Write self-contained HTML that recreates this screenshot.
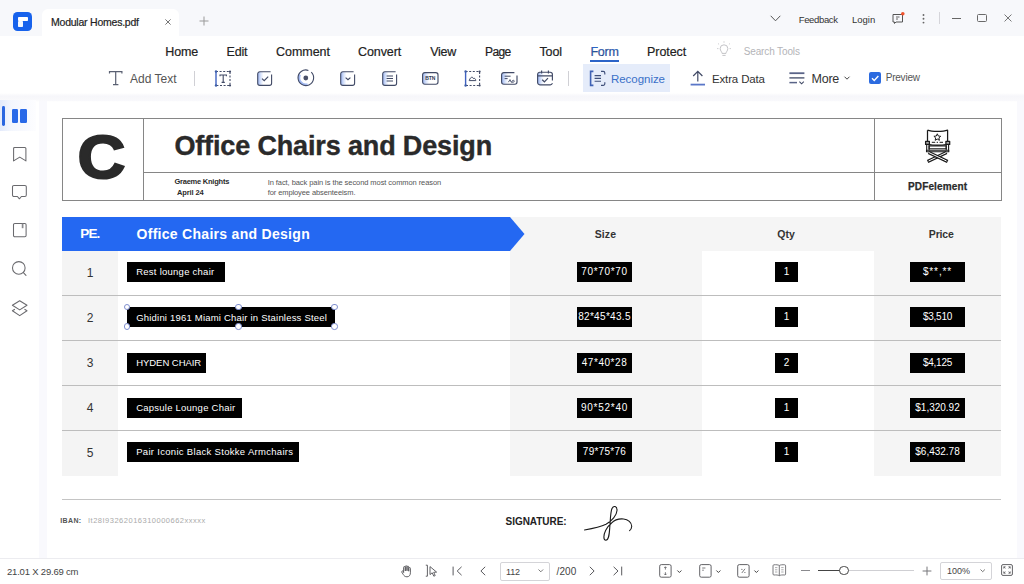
<!DOCTYPE html>
<html><head><meta charset="utf-8"><title>Modular Homes.pdf</title>
<style>
*{box-sizing:border-box;margin:0;padding:0}
html,body{width:1024px;height:584px;overflow:hidden;background:#fff;font-family:"Liberation Sans",sans-serif;color:#222}
.a{position:absolute}
.t{position:absolute;white-space:nowrap;line-height:1}
#titlebar{left:0;top:0;width:1024px;height:36px;background:#f7f8fb}
#tab{left:42px;top:8.5px;width:137px;height:27.5px;background:#fff;border-radius:6px 6px 0 0}
#ribbon{left:0;top:36px;width:1024px;height:58px;background:#fff}
#shade{left:0;top:93px;width:1024px;height:9px;background:linear-gradient(180deg,#fff 0,#f6f6fa 35%,#f8f8fb 70%,rgba(255,255,255,0) 100%)}
#work{left:39px;top:94px;width:985px;height:464px;background:#f9f9fd}
#page{left:47px;top:101px;width:970px;height:457px;background:#fff}
#side{left:0;top:94px;width:39px;height:464px;background:#fff}
#status{left:0;top:558px;width:1024px;height:26px;background:#fff;border-top:1px solid #ececf0}
.menu{top:46px;font-size:12.5px;color:#222;-webkit-text-stroke:.2px #222}
.tb{top:73.7px;font-size:11.5px;color:#333}
svg{position:absolute;overflow:visible}
.bb{position:absolute;background:#000;color:#fff;font-size:9.5px;line-height:19.5px;height:19.5px;white-space:nowrap;text-align:center}
.bn{font-size:10px}
.num{position:absolute;width:56px;left:62px;text-align:center;font-size:12px;color:#333;line-height:1}
.hl{position:absolute;left:62px;width:939px;height:1px;background:#bdbdbd}
</style></head><body>
<div class="a" id="titlebar"></div>
<div class="a" id="tab"></div>
<div class="a" id="ribbon"></div>
<div class="a" id="work"></div>
<div class="a" id="page"></div>
<div class="a" id="side"></div>
<div class="a" id="shade"></div>
<div class="a" id="status"></div>


<!-- SIDEBAR -->
<div class="a" style="left:0;top:100px;width:36px;height:31px;background:linear-gradient(90deg,#e3eafb 0,#f3f6fd 30%,#fdfdff 100%)"></div>
<div class="a" style="left:2px;top:106px;width:2.8px;height:19.5px;background:#2a66e0;border-radius:1.4px"></div>
<div class="a" style="left:11.6px;top:109px;width:6.6px;height:13.8px;background:#2a6ae8;border-radius:1.2px"></div>
<div class="a" style="left:19.9px;top:109px;width:6.8px;height:13.8px;background:#2a6ae8;border-radius:1.2px"></div>
<svg style="left:12px;top:146px" width="16" height="17" viewBox="0 0 16 17" fill="none" stroke="#6a6a6e" stroke-width="1.05" stroke-linejoin="round"><path d="M1.6 2.4A1 1 0 0 1 2.6 1.4H12.9A1 1 0 0 1 13.9 2.4V14.9L7.75 11.1 1.6 14.9Z"/></svg>
<svg style="left:11px;top:184px" width="17" height="17" viewBox="0 0 17 17" fill="none" stroke="#6a6a6e" stroke-width="1.05" stroke-linejoin="round"><path d="M2.9 1.5H13.9A1.4 1.4 0 0 1 15.3 2.9V11.1A1.4 1.4 0 0 1 13.9 12.500H10.400L8.400 14.800 6.400 12.500H2.900A1.400 1.400 0 0 1 1.500 11.100V2.900A1.400 1.400 0 0 1 2.900 1.500Z"/></svg>
<svg style="left:12px;top:222px" width="16" height="16" viewBox="0 0 16 16" fill="none" stroke="#6a6a6e" stroke-width="1.05"><rect x="1.5" y="1.4" width="12.6" height="13.400" rx="1.300"/><path d="M10.600 1.600V6.200" stroke-width="1.700" stroke="#8a8a8e"/></svg>
<svg style="left:11px;top:260px" width="17" height="17" viewBox="0 0 17 17" fill="none" stroke="#6a6a6e" stroke-width="1.050" stroke-linecap="round"><circle cx="7.800" cy="7.900" r="6.300"/><path d="M12.400 12.600 15 15.400"/></svg>
<svg style="left:11px;top:299px" width="18" height="19" viewBox="0 0 18 19" fill="none" stroke="#6a6a6e" stroke-width="1.050" stroke-linejoin="round"><path d="M8.700 1.700 16 6.300 8.700 10.900 1.400 6.300Z"/><path d="M3.900 10.200 1.400 11.800 8.700 16.600 16 11.800 13.500 10.200"/></svg>

<!-- TITLE BAR -->
<div class="a" style="left:13px;top:12px;width:19px;height:19px;background:#1762ec;border-radius:4.5px"></div>
<div class="a" style="left:17.5px;top:16.5px;width:10px;height:4.300px;background:#fff;border-radius:.8px"></div>
<div class="a" style="left:17.5px;top:21.400px;width:5.400px;height:5.400px;background:#f4f8ff;border-radius:.8px"></div>
<div class="t" id="tabtxt" style="letter-spacing:-0.227px;-webkit-text-stroke:.2px #222;left:51px;top:17.1px;font-size:10.5px;color:#222">Modular Homes.pdf</div>
<svg style="left:165px;top:18.6px" width="6" height="6" viewBox="0 0 6 6"><path d="M.4.4 5.600 5.600M5.600.4.4 5.600" stroke="#666" stroke-width=".9" fill="none"/></svg>
<svg style="left:199px;top:16px" width="10" height="10" viewBox="0 0 10 10"><path d="M5 .5V9.5M.5 5H9.5" stroke="#999" stroke-width="1" fill="none"/></svg>
<svg style="left:770px;top:15px" width="11" height="7" viewBox="0 0 11 7"><path d="M.7.8 5.5 5.8 10.3.8" stroke="#555" stroke-width="1" fill="none"/></svg>
<div class="t" id="fb" style="letter-spacing:-0.348px;left:798.7px;top:14.5px;font-size:9.5px;color:#333">Feedback</div>
<div class="t" id="lg" style="letter-spacing:-0.012px;left:852px;top:14.5px;font-size:9.5px;color:#333">Login</div>
<svg style="left:892px;top:12px" width="14" height="13" viewBox="0 0 14 13"><path d="M1 2.5h9.5v7.5H4l-1.5 1.5V10H1z" stroke="#555" stroke-width="1" fill="none"/><path d="M4 5h3.5M4 7h2" stroke="#555" stroke-width=".9"/><circle cx="10.8" cy="1.8" r="1.8" fill="#f0522c"/></svg>
<svg style="left:922.200px;top:13.500px" width="3" height="10" viewBox="0 0 3 10"><circle cx="1.500" cy="1" r=".950" fill="#666"/><circle cx="1.500" cy="4.800" r=".950" fill="#666"/><circle cx="1.500" cy="8.600" r=".950" fill="#666"/></svg>
<div class="a" style="left:939px;top:12px;width:1px;height:12px;background:#d5d5da"></div>
<div class="a" style="left:951.500px;top:18px;width:9px;height:1px;background:#666"></div>
<div class="a" style="left:977px;top:14px;width:10px;height:8px;border:1px solid #6a6a6a;border-radius:1.500px"></div>
<svg style="left:1003.500px;top:14.200px" width="8" height="8" viewBox="0 0 9 9"><path d="M.6.6 8.4 8.4M8.4.6.6 8.4" stroke="#666" stroke-width="1" fill="none"/></svg>

<!-- MENU -->
<div class="t menu" id="m1" style="letter-spacing:-0.115px;left:165.3px">Home</div>
<div class="t menu" id="m2" style="letter-spacing:-0.182px;left:226.5px">Edit</div>
<div class="t menu" id="m3" style="letter-spacing:-0.031px;left:276px">Comment</div>
<div class="t menu" id="m4" style="letter-spacing:-0.08px;left:358px">Convert</div>
<div class="t menu" id="m5" style="letter-spacing:-0.292px;left:430.3px">View</div>
<div class="t menu" id="m6" style="letter-spacing:-0.577px;left:485px;font-size:12px">Page</div>
<div class="t menu" id="m7" style="letter-spacing:-0.146px;left:539.5px">Tool</div>
<div class="t menu" id="m8" style="letter-spacing:-0.291px;left:590.5px;color:#2c64c8">Form</div>
<div class="a" style="left:590px;top:60px;width:29px;height:1.5px;background:#2c64c8"></div>
<div class="t menu" id="m9" style="letter-spacing:-0.052px;left:647px">Protect</div>
<div class="t" id="st" style="letter-spacing:-0.122px;left:743.7px;top:46.8px;font-size:10px;color:#b4b4b8">Search Tools</div>

<!-- TOOLBAR -->
<div class="a" style="left:583px;top:64px;width:87px;height:28px;background:#e5ecfa"></div>
<div class="t tb" id="t1" style="top:73.2px;letter-spacing:0.031px;font-size:12px;left:130px;color:#555">Add Text</div>
<div class="a" style="left:194px;top:71px;width:1px;height:15px;background:#d0d0d5"></div>
<div class="a" style="left:568px;top:71px;width:1px;height:15px;background:#d0d0d5"></div>
<div class="t tb" id="t2" style="letter-spacing:-0.043px;left:611px;color:#3a70c8">Recognize</div>
<div class="t tb" id="t3" style="letter-spacing:-0.148px;left:712px">Extra Data</div>
<div class="t tb" id="t4" style="top:72.8px;letter-spacing:-0.228px;font-size:12.5px;left:811.5px">More</div>
<div class="a" style="left:868.700px;top:72px;width:12.200px;height:12.200px;background:#2c6be0;border-radius:2px"></div>
<svg style="left:868.700px;top:72px" width="12.200" height="12.200" viewBox="0 0 13 13"><path d="M3.2 6.6 5.6 9 10 4.2" stroke="#fff" stroke-width="1.5" fill="none"/></svg>
<div class="t" id="t5" style="letter-spacing:-0.213px;left:885.7px;top:73.4px;font-size:10px;color:#555">Preview</div>


<!-- TOOLBAR ICONS -->
<svg width="0" height="0" style="left:0;top:0"><defs><linearGradient id="lg1" x1="0" y1="0" x2="1" y2="0"><stop offset="0" stop-color="#9fb8f2"/><stop offset=".25" stop-color="#dfe8fb"/><stop offset=".42" stop-color="#ffffff"/></linearGradient></defs></svg>

<svg style="left:108px;top:70px" width="16" height="16" viewBox="0 0 16 16" fill="none" stroke="#5a6072" stroke-width="1.2"><path d="M1.5 3.6V1.6H13.9V3.6M7.7 1.6V14.6M5 14.6H10.4"/></svg>
<svg style="left:214px;top:70px" width="18" height="17" viewBox="0 0 18 17" fill="none"><path d="M2 1.5H16V15.5H2" stroke="#414a66" stroke-width="1.1" stroke-dasharray="2 1.6"/><path d="M2 1.5V15.5" stroke="#3f62c0" stroke-width="1.4"/><circle cx="2" cy="1.5" r="1.2" fill="#3f5fa8"/><circle cx="2" cy="15.5" r="1.2" fill="#3f5fa8"/><circle cx="16" cy="1.5" r="1.1" fill="#414a66"/><circle cx="16" cy="15.5" r="1.1" fill="#414a66"/><path d="M6 6.2V5H12.4V6.2M9.2 5V12.4M7.6 12.4H10.8" stroke="#414a66" stroke-width="1.1"/></svg>
<svg style="left:257px;top:71px" width="16" height="15" viewBox="0 0 16 15" fill="none"><rect x=".8" y=".8" width="13.6" height="13.6" rx="2" fill="url(#lg1)"/><path d="M13.6.7H2.9A2.2 2.2 0 0 0 .7 2.9V12.2A2.2 2.2 0 0 0 2.9 14.4H12.4A2.2 2.2 0 0 0 14.6 12.2V3.6" stroke="#414a66" stroke-width="1.1"/><path d="M5 7.6 7.2 9.6 11.2 5.6" stroke="#414a66" stroke-width="1.2"/></svg>
<svg style="left:297px;top:69px" width="18" height="18" viewBox="0 0 18 18" fill="none"><path d="M2.9 5.6A6.9 6.9 0 0 0 10.6 15.5" stroke="#a4bbf3" stroke-width="2.4"/><path d="M14.3 3.2A7.8 7.8 0 1 1 11.4 1.4" stroke="#414a66" stroke-width="1.1"/><circle cx="8.8" cy="9" r="2.4" fill="#4a5068"/></svg>
<svg style="left:340px;top:71px" width="16" height="15" viewBox="0 0 16 15" fill="none"><rect x=".8" y=".8" width="13.6" height="13.6" rx="2" fill="url(#lg1)"/><path d="M13.6.7H2.9A2.2 2.2 0 0 0 .7 2.9V12.2A2.2 2.2 0 0 0 2.9 14.4H12.4A2.2 2.2 0 0 0 14.6 12.2V3.6" stroke="#414a66" stroke-width="1.1"/><path d="M5.6 6.6 8 8.8 10.4 6.6" stroke="#414a66" stroke-width="1.2"/></svg>
<svg style="left:382px;top:71px" width="16" height="15" viewBox="0 0 16 15" fill="none"><rect x=".8" y=".8" width="13.6" height="13.6" rx="2" fill="url(#lg1)"/><path d="M13.6.7H2.9A2.2 2.2 0 0 0 .7 2.9V12.2A2.2 2.2 0 0 0 2.9 14.4H12.4A2.2 2.2 0 0 0 14.6 12.2V3.6" stroke="#414a66" stroke-width="1.1"/><path d="M4.6 5H11M4.6 7.5H11M4.6 10H11" stroke="#414a66" stroke-width="1.1"/></svg>
<svg style="left:422px;top:72px" width="17" height="13" viewBox="0 0 17 13" fill="none"><rect x=".8" y=".8" width="15" height="11.2" rx="2" fill="url(#lg1)"/><rect x=".6" y=".6" width="15.4" height="11.6" rx="2.2" stroke="#414a66" stroke-width="1.15"/><text x="8.3" y="8.2" font-family="Liberation Sans,sans-serif" font-size="5" font-weight="bold" fill="#30384e" text-anchor="middle" stroke="none">BTN</text></svg>
<svg style="left:464px;top:70px" width="18" height="17" viewBox="0 0 18 17" fill="none"><path d="M1.6 1.5H15.6V15.5H1.6" stroke="#414a66" stroke-width="1.1" stroke-dasharray="2 1.6"/><path d="M1.6 1.5V15.5" stroke="#3f62c0" stroke-width="1.4"/><circle cx="1.6" cy="1.5" r="1.2" fill="#3f5fa8"/><circle cx="1.6" cy="15.5" r="1.2" fill="#3f5fa8"/><circle cx="15.6" cy="1.5" r="1.1" fill="#414a66"/><circle cx="15.6" cy="15.5" r="1.1" fill="#414a66"/><path d="M5.2 10.6H11.8C11.6 8.6 10.4 7.8 9.4 8.6C8.8 6.6 6.6 6.4 5.2 10.6Z" stroke="#414a66" stroke-width="1"/></svg>
<svg style="left:501px;top:72px" width="17" height="13" viewBox="0 0 17 13" fill="none"><rect x=".8" y=".8" width="15" height="11.2" rx="2" fill="url(#lg1)"/><path d="M13.4.6H2.8A2.2 2.2 0 0 0 .6 2.8V10A2.2 2.2 0 0 0 2.8 12.2H13.8A2.2 2.2 0 0 0 16 10V3.4" stroke="#414a66" stroke-width="1.15"/><path d="M3.6 4.2H9.6M3.6 6.6H6.6" stroke="#414a66" stroke-width="1"/><path d="M7.4 10.2 9 7.6 10.2 10.2H11C10.6 8 13.4 7.6 13.2 9.4C13.1 10.4 11.4 10.4 11 10.2" stroke="#414a66" stroke-width=".9"/></svg>
<svg style="left:537px;top:70px" width="17" height="16" viewBox="0 0 17 16" fill="none"><rect x=".8" y="2.400" width="14.400" height="12.200" rx="2" fill="url(#lg1)"/><path d="M15.4 10.6V4.4A2.2 2.2 0 0 0 13.2 2.2H2.8A2.2 2.2 0 0 0 .6 4.4V12.6A2.2 2.2 0 0 0 2.8 14.8H13.2A2.2 2.2 0 0 0 15.4 13.2M.8 5.8H15.2M4.6.4V3.4M11.4.4V3.4" stroke="#414a66" stroke-width="1.15"/><path d="M5.2 9.8 7.4 11.8 11 8.2" stroke="#414a66" stroke-width="1.2"/></svg>
<svg style="left:589px;top:70px" width="17" height="17" viewBox="0 0 17 17" fill="none"><path d="M4.4 1.4H1.6V15.4H4.4" stroke="#3f62b4" stroke-width="1.6"/><path d="M12 1.4H14.2A1.6 1.6 0 0 1 15.8 3V4.6M15.8 12.2V13.8A1.6 1.6 0 0 1 14.2 15.4H12" stroke="#3f4f7a" stroke-width="1.15"/><path d="M5.6 5.6H12M5.6 8.4H12M5.6 11.2H12" stroke="#3f4f7a" stroke-width="1.1"/></svg>
<svg style="left:690px;top:70px" width="16" height="16" viewBox="0 0 16 16" fill="none"><path d="M.6 14.6H15" stroke="#5a77c8" stroke-width="1.8"/><path d="M7.8 11.4V1.4M3.2 6 7.8 1.3 12.4 6" stroke="#414a66" stroke-width="1.2"/></svg>
<svg style="left:789px;top:72px" width="16" height="13" viewBox="0 0 16 13" fill="none"><path d="M.4 1.2H15.4" stroke="#5a6488" stroke-width="1.8"/><path d="M.4 5.9H15.4" stroke="#414a66" stroke-width="1.3"/><path d="M.4 10.6H8" stroke="#5a6488" stroke-width="1.5"/><path d="M10.4 9.6 12.6 11.8 14.8 9.6" stroke="#414a66" stroke-width="1.1"/></svg>
<svg style="left:844px;top:76px" width="6" height="4" viewBox="0 0 6 4" fill="none"><path d="M.5.7 3 3.2 5.5.7" stroke="#444" stroke-width="1"/></svg>
<svg style="left:717px;top:41px" width="14" height="17" viewBox="0 0 14 17" fill="none" stroke="#c4c4c8" stroke-width="1"><path d="M5 12.4H9M5.4 14.4H8.6M5 12.4C5 10.6 3.2 10 3.2 7.6A3.8 3.8 0 0 1 10.8 7.6C10.8 10 9 10.6 9 12.4"/><path d="M7 .4V2M1.2 2.6 2.4 3.8M12.8 2.6 11.6 3.8M.2 7.6H1.4M12.6 7.6H13.8" stroke-dasharray="1.2 .6"/></svg>

<!-- DOC -->
<div class="a" style="left:62px;top:118px;width:940px;height:83px;border:1px solid #868686"></div>
<div class="a" style="left:143px;top:118px;width:1px;height:83px;background:#868686"></div>
<div class="a" style="left:874px;top:118px;width:1px;height:83px;background:#868686"></div>
<div class="a" style="left:143px;top:172px;width:858px;height:1px;background:#868686"></div>
<div class="t" id="bigc" style="-webkit-text-stroke:2px #2a2a2a;transform:scaleX(1.07);transform-origin:50% 50%;left:79px;top:126.2px;font-size:62px;font-weight:bold;color:#2a2a2a">C</div>
<div class="t" id="h1" style="letter-spacing:-0.143px;-webkit-text-stroke:.4px #2a2a2a;left:174.4px;top:132.6px;font-size:27px;font-weight:bold;color:#2a2a2a">Office Chairs and Design</div>
<div class="t" id="gk" style="letter-spacing:-0.226px;left:174.4px;top:178px;font-size:7.5px;font-weight:bold;color:#2a2a2a">Graeme Knights</div>
<div class="t" id="ap" style="letter-spacing:-0.117px;left:177px;top:188.8px;font-size:7.5px;font-weight:bold;color:#2a2a2a">April 24</div>
<div class="t" id="p1" style="letter-spacing:-0.072px;left:267.7px;top:179.2px;font-size:7.5px;color:#555">In fact, back pain is the second most common reason</div>
<div class="t" id="p2" style="letter-spacing:-0.094px;left:267.7px;top:188.8px;font-size:7.5px;color:#555">for employee absenteeism.</div>
<div class="t" id="pdfe" style="-webkit-text-stroke:.25px #2a2a2a;letter-spacing:0.134px;left:908px;top:181.7px;font-size:10px;font-weight:bold;color:#2a2a2a">PDFelement</div>

<svg style="left:917px;top:124px" width="40" height="44" viewBox="0 0 40 44" fill="none" stroke="#1a1a1a" stroke-width="1.25" stroke-linejoin="round"><path d="M10.5 6.2C15 7.9 26 7.9 30.6 6.2V17.4M10.5 6.2V17.4M12.4 20.5C16 21.4 25 21.4 28.8 20.5"/><path d="M20.3 9.8 21.3 12 23.7 12.3 21.9 13.9 22.4 16.3 20.3 15.1 18.2 16.3 18.7 13.9 16.9 12.3 19.3 12Z" stroke-width="1"/><path d="M14.8 18.3H18.2M19.7 18.3H21M22.6 18.3H26" stroke-width="1"/><rect x="8.6" y="17.4" width="3.8" height="3" fill="#aaa"/><rect x="28.9" y="17.4" width="3.8" height="3" fill="#aaa"/><path d="M9.7 20.4V26.2M12.1 20.4V26.2M29.2 20.4V26.2M31.6 20.4V26.2" stroke-width="1.1"/><rect x="12.1" y="21.9" width="17.1" height="2.9" stroke-width="1.1"/><rect x="9.5" y="26.2" width="22.3" height="1.5" stroke-width="1.1"/><path d="M29.6 28.4 10.6 37.4" stroke-width="3.3" stroke-linecap="butt"/><path d="M29.4 28.5 11.6 37" stroke="#fff" stroke-width="1"/><path d="M11.6 28.4 30.6 37.4" stroke-width="3.3"/><path d="M11.8 28.5 29.6 37" stroke="#fff" stroke-width="1"/></svg>
<svg style="left:580px;top:502px" width="60" height="42" viewBox="580 502 60 42" fill="none" stroke="#1a1a1a" stroke-width="1.1" stroke-linecap="round"><path d="M584.5 530C592 528.600 600 527 606 524.200C612 521 616.800 515 617 510.500C617.200 506 613.600 505.200 612 508.500C610.400 512 610.400 520 609.800 527C609.400 533 609 540.200 605.800 540.200C603.200 540.200 603.400 535 605.600 530.500C607 527.500 609 525 611.400 523.200C614 520.500 619 518.600 623.500 519C628 519.400 631.800 522.500 631.700 526.500C631.600 528.500 630.600 529.800 629.600 530.600"/></svg>
<!-- table -->
<div class="a" style="left:510px;top:217px;width:491px;height:34px;background:#f5f5f5"></div>
<div class="a" style="left:62px;top:250px;width:56px;height:226px;background:#f4f4f4"></div>
<div class="a" style="left:510px;top:250px;width:192px;height:226px;background:#f5f5f5"></div>
<div class="a" style="left:874px;top:250px;width:127px;height:226px;background:#f5f5f5"></div>
<div class="a" style="left:62px;top:217px;width:448px;height:34px;background:#2468f2"></div>
<svg style="left:509px;top:217px" width="16" height="34" viewBox="0 0 16 34"><path d="M0 0H1L15.5 17 1 34H0z" fill="#2468f2"/></svg>
<div class="t" id="pe" style="letter-spacing:-0.883px;left:80.3px;top:226.5px;font-size:13.5px;font-weight:bold;color:#fff">PE.</div>
<div class="t" id="h2" style="letter-spacing:0.292px;left:136.5px;top:226.5px;font-size:14px;font-weight:bold;color:#fff">Office Chairs and Design</div>
<div class="t" id="c1" style="letter-spacing:0.061px;left:594.8px;top:229.1px;font-size:10.5px;font-weight:bold;color:#333">Size</div>
<div class="t" id="c2" style="letter-spacing:-0.008px;left:777.3px;top:229.1px;font-size:10.5px;font-weight:bold;color:#333">Qty</div>
<div class="t" id="c3" style="letter-spacing:-0.172px;left:928.8px;top:229.1px;font-size:10.5px;font-weight:bold;color:#333">Price</div>
<div class="hl" style="top:295px"></div>
<div class="hl" style="top:340px"></div>
<div class="hl" style="top:385px"></div>
<div class="hl" style="top:430px"></div>

<div class="num" style="top:266.7px">1</div>
<div class="num" style="top:311.9px">2</div>
<div class="num" style="top:357.1px">3</div>
<div class="num" style="top:402px">4</div>
<div class="num" style="top:447.3px">5</div>

<div class="bb" style="text-align:left;padding-left:9.200px;left:127px;top:262px;width:98px"><span id="b1" style="letter-spacing:0.254px;">Rest lounge chair</span></div>
<div class="bb" style="text-align:left;padding-left:9.200px;left:127px;top:307px;width:207.500px;border-radius:2px;line-height:21px"><span id="b2" style="letter-spacing:0.203px;">Ghidini 1961 Miami Chair in Stainless Steel</span></div>
<div class="a" style="left:123.8px;top:303.8px;width:6.400px;height:6.400px;border:1px solid #7f8fd0;border-radius:50%;background:#fff"></div>
<div class="a" style="left:235.3px;top:303.8px;width:6.400px;height:6.400px;border:1px solid #7f8fd0;border-radius:50%;background:#fff"></div>
<div class="a" style="left:331.3px;top:303.8px;width:6.400px;height:6.400px;border:1px solid #7f8fd0;border-radius:50%;background:#fff"></div>
<div class="a" style="left:123.8px;top:323.3px;width:6.400px;height:6.400px;border:1px solid #7f8fd0;border-radius:50%;background:#fff"></div>
<div class="a" style="left:235.3px;top:323.3px;width:6.400px;height:6.400px;border:1px solid #7f8fd0;border-radius:50%;background:#fff"></div>
<div class="a" style="left:331.3px;top:323.3px;width:6.400px;height:6.400px;border:1px solid #7f8fd0;border-radius:50%;background:#fff"></div>
<div class="bb" style="text-align:left;padding-left:9.200px;left:127px;top:353px;width:79px"><span id="b3" style="letter-spacing:-0.045px;">HYDEN CHAIR</span></div>
<div class="bb" style="text-align:left;padding-left:9.200px;left:127px;top:398px;width:115px"><span id="b4" style="letter-spacing:0.234px;">Capsule Lounge Chair</span></div>
<div class="bb" style="text-align:left;padding-left:9.200px;left:127px;top:442px;width:172px"><span id="b5" style="letter-spacing:0.307px;">Pair Iconic Black Stokke Armchairs</span></div>

<div class="bb bn" style="left:577px;top:262px;width:55px"><span id="b6" style="letter-spacing:0.663px;">70*70*70</span></div>
<div class="bb bn" style="left:577px;top:307px;width:55px"><span id="b7" style="letter-spacing:0.322px;">82*45*43.5</span></div>
<div class="bb bn" style="left:577px;top:353px;width:55px"><span id="b8" style="letter-spacing:0.549px;">47*40*28</span></div>
<div class="bb bn" style="left:577px;top:398px;width:55px"><span id="b9" style="letter-spacing:0.749px;">90*52*40</span></div>
<div class="bb bn" style="left:577px;top:442px;width:55px"><span id="b10" style="letter-spacing:0.278px;">79*75*76</span></div>

<div class="bb bn" style="left:775px;top:262px;width:23px"><span id="b11">1</span></div>
<div class="bb bn" style="left:775px;top:307px;width:23px"><span id="b12">1</span></div>
<div class="bb bn" style="left:775px;top:353px;width:23px"><span id="b13">2</span></div>
<div class="bb bn" style="left:775px;top:398px;width:23px"><span id="b14">1</span></div>
<div class="bb bn" style="left:775px;top:442px;width:23px"><span id="b15">1</span></div>

<div class="bb bn" style="left:910px;top:262px;width:55px"><span id="b16" style="letter-spacing:0.879px;">$**,**</span></div>
<div class="bb bn" style="left:910px;top:307px;width:55px"><span id="b17" style="letter-spacing:-0.259px;">$3,510</span></div>
<div class="bb bn" style="left:910px;top:353px;width:55px"><span id="b18" style="letter-spacing:-0.239px;">$4,125</span></div>
<div class="bb bn" style="left:910px;top:398px;width:55px"><span id="b19" style="letter-spacing:-0.012px;">$1,320.92</span></div>
<div class="bb bn" style="left:910px;top:442px;width:55px"><span id="b20" style="letter-spacing:-0.012px;">$6,432.78</span></div>

<div class="a" style="left:62px;top:499px;width:939px;height:1px;background:#c4c4c4"></div>
<div class="t" id="iban" style="letter-spacing:0.387px;left:60.2px;top:516.9px;font-size:7px;font-weight:bold;color:#555">IBAN:</div>
<div class="t" id="ibn" style="letter-spacing:0.501px;left:88px;top:516.5px;font-size:7.5px;color:#aaa">It28I93262016310000662xxxxx</div>
<div class="t" id="sig" style="letter-spacing:-0.054px;left:505.6px;top:517.2px;font-size:10px;font-weight:bold;color:#222">SIGNATURE:</div>

<!-- STATUS -->
<div class="t" id="dim" style="letter-spacing:-0.198px;left:7px;top:567.1px;font-size:9.5px;color:#444">21.01 X 29.69 cm</div>
<div class="a" style="left:500px;top:562px;width:50px;height:19px;border:1px solid #d4d4d8;border-radius:2px;background:#fff"></div>
<div class="t" id="pg" style="letter-spacing:-0.18px;left:506px;top:567.9px;font-size:9px;color:#444">112</div>
<div class="t" id="tot" style="letter-spacing:0.077px;left:556.6px;top:567px;font-size:10px;color:#444">/200</div>
<div class="a" style="left:940px;top:562px;width:52px;height:18px;border:1px solid #d4d4d8;border-radius:2px;background:#fff"></div>
<div class="t" id="zm" style="letter-spacing:-0.01px;left:947px;top:567.3px;font-size:9px;color:#444">100%</div>

<!-- STATUS ICONS -->
<svg style="left:400px;top:564px" width="13" height="14" viewBox="0 0 13 14" fill="none" stroke="#5a5a5e" stroke-width=".95" stroke-linejoin="round" stroke-linecap="round"><path d="M3.600 8.200V3.400A.850.850 0 0 1 5.300 3.400V6.600M5.300 6.600V2.600A.850.850 0 0 1 7 2.600V6.400M7 6.400V3A.850.850 0 0 1 8.700 3V6.800M8.700 6.800V4.400A.850.850 0 0 1 10.400 4.400V8.800C10.400 11.400 9 12.800 7 12.800C5 12.800 4.200 12 3.200 10.400L1.700 8A.900.900 0 0 1 3.200 7.200L3.600 8.200"/></svg>
<svg style="left:425px;top:564px" width="14" height="14" viewBox="0 0 14 14" fill="none" stroke="#5a5a5e" stroke-width=".950" stroke-linejoin="round"><path d="M.800 1.200H2.400V12.200H.800"/><path d="M5 2.600V10.600L7.200 8.800 8.800 12.200 10.200 11.600 8.700 8.300 11.600 8.100Z"/></svg>
<svg style="left:452px;top:566px" width="11" height="10" viewBox="0 0 11 10" fill="none" stroke="#5a5a5e" stroke-width="1"><path d="M1.100.600V9.400M9.600.800 5.200 5 9.600 9.200"/></svg>
<svg style="left:480px;top:566px" width="6" height="10" viewBox="0 0 6 10" fill="none" stroke="#5a5a5e" stroke-width="1"><path d="M5.200.800.900 5 5.200 9.200"/></svg>
<svg style="left:538px;top:569px" width="6" height="4" viewBox="0 0 6 4" fill="none" stroke="#666" stroke-width=".9"><path d="M.500.500 2.800 2.800 5.100.500"/></svg>
<svg style="left:589px;top:566px" width="6" height="10" viewBox="0 0 6 10" fill="none" stroke="#5a5a5e" stroke-width="1"><path d="M.800.800 5.100 5 .800 9.200"/></svg>
<svg style="left:613px;top:566px" width="10" height="10" viewBox="0 0 10 10" fill="none" stroke="#5a5a5e" stroke-width="1"><path d="M8.700.600V9.400M.600.800 5 5 .600 9.200"/></svg>
<svg style="left:659px;top:564px" width="13" height="14" viewBox="0 0 13 14" fill="none" stroke="#5a5a5e" stroke-width=".950"><rect x=".700" y=".600" width="11.400" height="12.600" rx="1.600"/><path d="M6.400 2.800V5.600M5.200 4 6.400 2.800 7.600 4M6.400 8.200V11M5.200 9.800 6.400 11 7.600 9.800" stroke-width=".800"/></svg>
<svg style="left:677px;top:569.500px" width="5" height="4" viewBox="0 0 5 4" fill="none" stroke="#444" stroke-width="1"><path d="M.400.500 2.400 2.500 4.400.500"/></svg>
<svg style="left:699px;top:564px" width="13" height="14" viewBox="0 0 13 14" fill="none" stroke="#5a5a5e" stroke-width=".950"><rect x=".700" y=".600" width="11.400" height="12.600" rx="1.600"/><path d="M3.200 4H6.400M3.200 6.200H4.800" stroke-width=".800"/></svg>
<svg style="left:715.500px;top:569.500px" width="5" height="4" viewBox="0 0 5 4" fill="none" stroke="#444" stroke-width="1"><path d="M.400.500 2.400 2.500 4.400.500"/></svg>
<svg style="left:737px;top:564px" width="13" height="14" viewBox="0 0 13 14" fill="none" stroke="#5a5a5e" stroke-width=".950"><rect x=".700" y=".600" width="11.400" height="12.600" rx="1.600"/><path d="M8 4.800 4.800 9" stroke-width=".800"/><circle cx="4.900" cy="5.300" r=".600" fill="#5a5a5e" stroke="none"/><circle cx="7.900" cy="8.500" r=".600" fill="#5a5a5e" stroke="none"/></svg>
<svg style="left:753.500px;top:569.500px" width="5" height="4" viewBox="0 0 5 4" fill="none" stroke="#444" stroke-width="1"><path d="M.400.500 2.400 2.500 4.400.500"/></svg>
<svg style="left:772px;top:564px" width="15" height="13" viewBox="0 0 15 13" fill="none" stroke="#6a6a6e" stroke-width=".900"><path d="M7.300 1.500C6.400.800 4 .600 1.900.800A1 1 0 0 0 1 1.800V10A1 1 0 0 0 2 11C4 10.800 6.400 11 7.300 11.700C8.200 11 10.600 10.800 12.600 11A1 1 0 0 0 13.600 10V1.800A1 1 0 0 0 12.700.800C10.600.600 8.200.800 7.300 1.500ZM7.300 1.500V11.700"/><path d="M3 3.600H5.400M3 5.800H5.400M3 8H5.400M9.200 3.600H11.600M9.200 5.800H11.600M9.200 8H11.600" stroke-width=".700" stroke="#8a8a8e"/></svg>
<div class="a" style="left:801px;top:569.500px;width:8.500px;height:1px;background:#8a8a8e"></div>
<div class="a" style="left:818px;top:569.500px;width:22px;height:1.500px;background:#444"></div>
<div class="a" style="left:848px;top:570px;width:66px;height:1px;background:#cfcfd3"></div>
<div class="a" style="left:839.300px;top:565.800px;width:9.400px;height:9.400px;border:1.100px solid #444;border-radius:50%;background:#fff"></div>
<svg style="left:922px;top:565.500px" width="10" height="10" viewBox="0 0 10 10" fill="none" stroke="#77777b" stroke-width="1"><path d="M5 .600V9.400M.600 5H9.400"/></svg>
<svg style="left:979.500px;top:568.500px" width="6" height="4" viewBox="0 0 6 4" fill="none" stroke="#666" stroke-width=".900"><path d="M.500.500 2.700 2.700 4.900.500"/></svg>
<svg style="left:1001px;top:564px" width="12" height="12" viewBox="0 0 12 12" fill="none" stroke="#5a5a5e" stroke-width=".950"><rect x=".600" y=".600" width="10.800" height="10.800" rx="1.400"/><path d="M2.800 4.600V2.800H4.600M7.400 2.800H9.200V4.600M9.200 7.400V9.200H7.400M4.600 9.200H2.800V7.400M2.800 2.800 4.400 4.400M9.200 2.800 7.600 4.400M9.200 9.200 7.600 7.600M2.800 9.200 4.400 7.600" stroke-width=".800"/></svg>
</body></html>
